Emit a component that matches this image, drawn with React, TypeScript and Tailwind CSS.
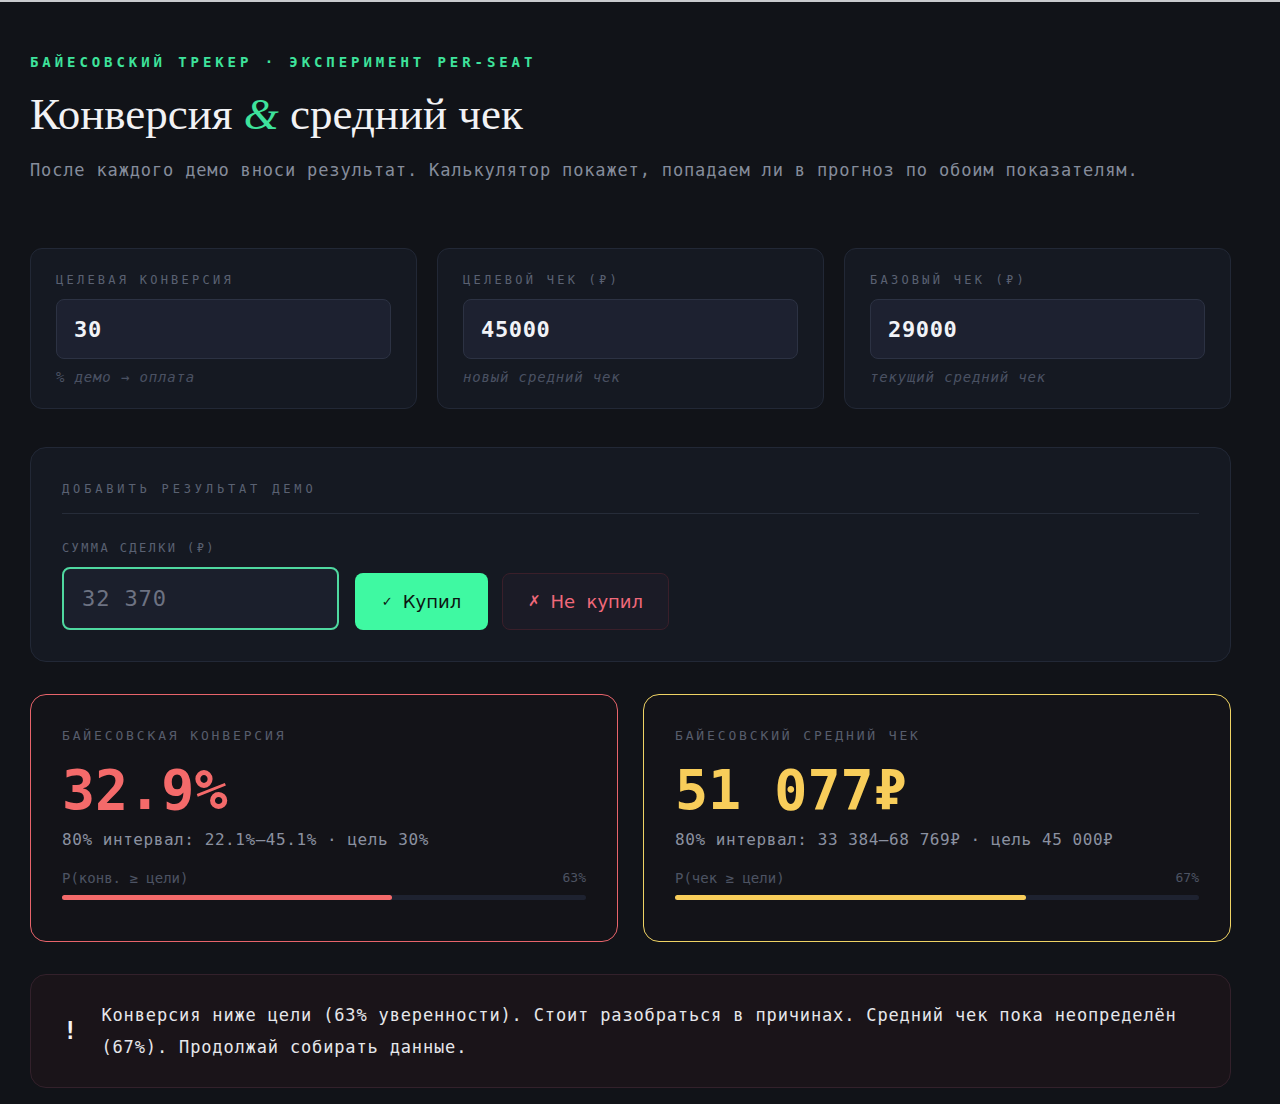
import React from 'react';

const mono = { fontFamily: '"DejaVu Sans Mono", "Liberation Mono", monospace' };

const targets = [
  { label: 'ЦЕЛЕВАЯ КОНВЕРСИЯ', value: '30', hint: '% демо → оплата' },
  { label: 'ЦЕЛЕВОЙ ЧЕК (₽)', value: '45000', hint: 'новый средний чек' },
  { label: 'БАЗОВЫЙ ЧЕК (₽)', value: '29000', hint: 'текущий средний чек' },
];

const TargetCard = ({ t }: { t: (typeof targets)[0] }) => (
  <div className="flex-1 rounded-xl border border-[#222836] bg-[#151922] px-[25px] pt-[24px] pb-[22px]">
    <div className="text-[12px] leading-[14px] tracking-[0.27em] text-[#5a6172]">{t.label}</div>
    <div className="mt-[12px] flex h-[60px] items-center rounded-lg border border-[#2c3243] bg-[#1d2130] px-[17px]">
      <span className="text-[22px] font-bold tracking-[0.03em] text-[#f1f3f7]">{t.value}</span>
    </div>
    <div className="mt-[9px] text-[14px] italic leading-[18px] tracking-[0.06em] text-[#4a5162]">{t.hint}</div>
  </div>
);

const ResultCard = ({
  label,
  value,
  interval,
  probLabel,
  prob,
  tone,
}: {
  label: string;
  value: string;
  interval: string;
  probLabel: string;
  prob: number;
  tone: 'red' | 'yellow';
}) => {
  const isRed = tone === 'red';
  return (
    <div
      className={
        'flex-1 rounded-2xl border bg-[#131318] px-[31px] pt-[32px] pb-[41px] ' +
        (isRed ? 'border-[#e8646b]' : 'border-[#efd364]')
      }
    >
      <div className="text-[13px] leading-[18px] tracking-[0.22em] text-[#575d6c]">{label}</div>
      <div
        className={
          'mt-[14px] text-[55px] font-semibold leading-[62px] ' + (isRed ? 'text-[#f46a6a]' : 'text-[#f8cd5a]')
        }
      >
        {value}
      </div>
      <div className="mt-[9px] text-[16px] leading-[20px] tracking-[0.035em] text-[#8b91a0]">{interval}</div>
      <div className="mt-[20px] flex justify-between text-[14px] leading-[16px] text-[#4d5363]">
        <span>{probLabel}</span>
        <span className="text-[13px]">{prob}%</span>
      </div>
      <div className="mt-[9px] h-[5px] rounded-full bg-[#1e2230]">
        <div
          className={'h-full rounded-full ' + (isRed ? 'bg-[#f46a6a]' : 'bg-[#f8cd5a]')}
          style={{ width: `${prob}%` }}
        />
      </div>
    </div>
  );
};

export default function App() {
  return (
    <div className="min-h-[1104px] border-t-2 border-[#c9cace] bg-[#111318] pb-[18px]" style={mono}>
      <div className="w-[1231px] pl-[30px]">
        <div className="pt-[50px] text-[14px] font-semibold leading-[20px] tracking-[0.28em] text-[#3ee39c]">
          БАЙЕСОВСКИЙ ТРЕКЕР · ЭКСПЕРИМЕНТ PER-SEAT
        </div>
        <h1
          className="mt-[16px] text-[45px] leading-[52px] text-[#f2f2f4]"
          style={{ fontFamily: '"Liberation Serif", "DejaVu Serif", serif' }}
        >
          Конверсия <span className="italic text-[#3ee39c]">&amp;</span> средний чек
        </h1>
        <p className="mt-[18px] text-[17px] leading-[24px] tracking-[0.05em] text-[#858c9b]">
          После каждого демо вноси результат. Калькулятор покажет, попадаем ли в прогноз по обоим показателям.
        </p>

        <div className="mt-[66px] flex gap-[20px]">
          {targets.map((t) => (
            <TargetCard key={t.label} t={t} />
          ))}
        </div>

        <div className="mt-[38px] rounded-2xl border border-[#222836] bg-[#151922] px-[31px] pt-[32px] pb-[31px]">
          <div className="text-[12px] leading-[18px] tracking-[0.32em] text-[#5a6172]">ДОБАВИТЬ РЕЗУЛЬТАТ ДЕМО</div>
          <div className="mt-[15px] h-px bg-[#262c39]" />
          <div className="mt-[25px] text-[12px] leading-[18px] tracking-[0.2em] text-[#5a6172]">СУММА СДЕЛКИ (₽)</div>
          <div className="mt-[10px] flex items-end gap-[16px]">
            <div className="flex h-[63px] w-[277px] items-center rounded-lg border-2 border-[#4fd8a0] bg-[#1b1f2c] px-[18px]">
              <span className="text-[22px] tracking-[0.04em] text-[#6d7282]">32 370</span>
            </div>
            <div className="flex items-center gap-[14px]" style={{ fontFamily: '"DejaVu Sans", sans-serif' }}>
              <button className="flex h-[57px] w-[133px] items-center justify-center gap-[10px] rounded-lg bg-[#3ff9a2] text-[18px] text-[#0c1411]">
                <span className="text-[13px]">✓</span>
                <span>Купил</span>
              </button>
              <button className="flex h-[57px] w-[167px] items-center justify-center gap-[10px] rounded-lg border border-[#3a1f2a] bg-[#1b1b26] text-[18px] text-[#f0697a]">
                <span className="text-[15px]">✗</span>
                <span>Не&nbsp;&nbsp;купил</span>
              </button>
            </div>
          </div>
        </div>

        <div className="mt-[32px] flex gap-[25px]">
          <ResultCard
            label="БАЙЕСОВСКАЯ КОНВЕРСИЯ"
            value="32.9%"
            interval="80% интервал: 22.1%–45.1% · цель 30%"
            probLabel="P(конв. ≥ цели)"
            prob={63}
            tone="red"
          />
          <ResultCard
            label="БАЙЕСОВСКИЙ СРЕДНИЙ ЧЕК"
            value="51 077₽"
            interval="80% интервал: 33 384–68 769₽ · цель 45 000₽"
            probLabel="P(чек ≥ цели)"
            prob={67}
            tone="yellow"
          />
        </div>

        <div className="mt-[32px] flex items-center gap-[24px] rounded-2xl border border-[#33212b] bg-[#1a1419] py-[24px] pr-[40px] pl-[32px]">
          <span className="text-[24px] font-bold text-[#f2f2f4]">!</span>
          <p className="text-[17px] leading-[32px] tracking-[0.05em] text-[#e6e7eb]">
            Конверсия ниже цели (63% уверенности). Стоит разобраться в причинах. Средний чек пока неопределён (67%).
            Продолжай собирать данные.
          </p>
        </div>
      </div>
    </div>
  );
}
